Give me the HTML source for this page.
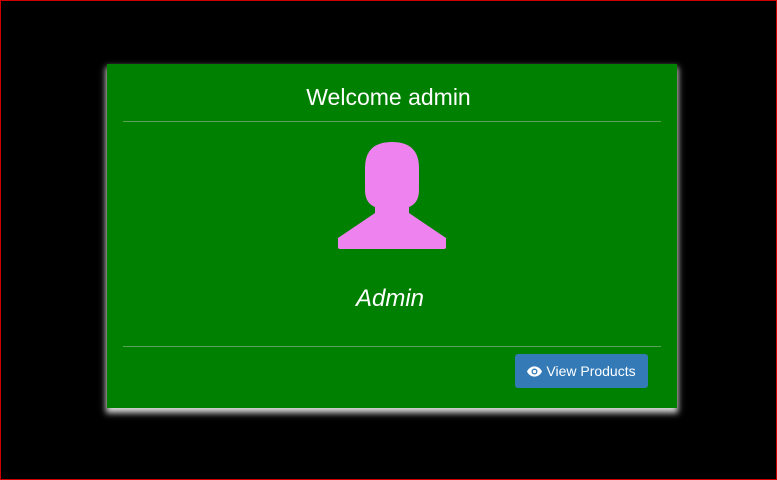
<!DOCTYPE html>
<html><head><style>
html,body{margin:0;padding:0;}
body{width:777px;height:480px;background:#000;position:relative;overflow:hidden;font-family:"Liberation Sans",sans-serif;}
.frame{position:absolute;left:0;top:0;width:775px;height:478px;border:1px solid #c00;}
.card{position:absolute;left:107px;top:64px;width:570px;height:344px;background:#008000;box-shadow:0 4px 6px 1px rgba(255,255,255,0.85);}
.title{position:absolute;left:0;right:0;top:84px;text-align:center;color:#fff;font-size:23px;}
.hr{position:absolute;left:123px;width:538px;height:1px;background:#5aa35a;}
.name{position:absolute;left:3px;right:0;top:285px;text-align:center;color:#fff;font-size:24px;font-style:italic;}
.btn{position:absolute;left:515px;top:354px;width:133px;height:34px;background:#337ab7;border-radius:3px;color:#fff;font-size:14px;line-height:34px;text-align:center;}
</style></head><body>
<div class="frame"></div>
<div class="card"></div>
<div class="title">Welcome admin</div>
<div class="hr" style="top:121px"></div>
<svg style="position:absolute;left:0;top:0" width="777" height="480">
<path fill="#ee82ee" d="M365,168 Q365,142 392,142 Q419,142 419,168 L419,190 Q419,203 409,207 L409,213 L446,238 L446,247 Q446,249 444,249 L340,249 Q338,249 338,247 L338,238 L375,213 L375,207 Q365,203 365,190 Z"/>
</svg>
<div class="name">Admin</div>
<div class="hr" style="top:346px"></div>
<div class="btn"><svg width="15" height="11" viewBox="0 0 16 11" style="vertical-align:-1px;margin-right:4px"><path fill="#fff" d="M8,0C4,0 1,3 0,5.5C1,8 4,11 8,11C12,11 15,8 16,5.5C15,3 12,0 8,0Z"/><circle cx="8" cy="5.5" r="3.2" fill="#337ab7"/><circle cx="8" cy="5.5" r="1.8" fill="#fff"/></svg>View Products</div>
</body></html>
